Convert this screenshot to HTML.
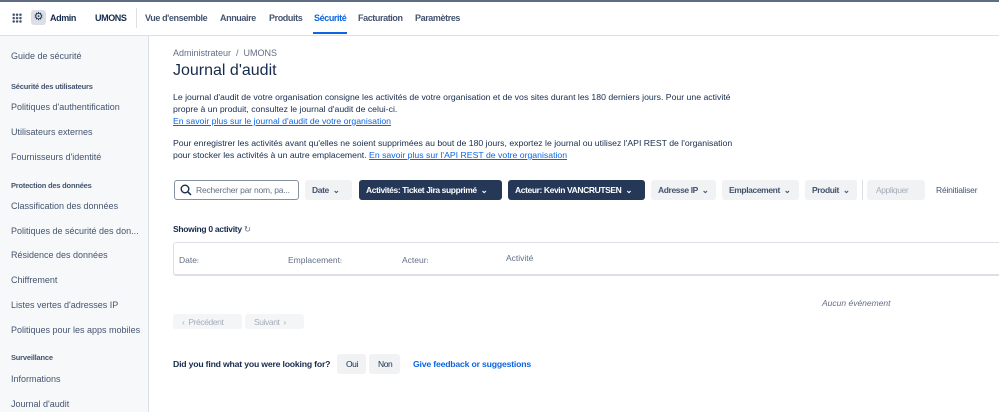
<!DOCTYPE html>
<html><head><meta charset="utf-8"><style>
*{margin:0;padding:0;box-sizing:border-box}
body{width:999px;height:412px;overflow:hidden;background:#fff;font-family:"Liberation Sans",sans-serif;color:#172b4d;position:relative}
.a{position:absolute;white-space:nowrap}
.nav{font-size:9px;letter-spacing:-0.4px;font-weight:bold;color:#44546f;top:13px}
.sb{font-size:9px;color:#44546f;left:11px}
.sh{font-size:7.5px;font-weight:bold;color:#44546f;left:11px;letter-spacing:-0.2px}
.btn{position:absolute;top:180px;height:20px;background:#f1f2f4;border-radius:3px;font-size:8.5px;letter-spacing:-0.4px;font-weight:bold;color:#44546f;padding:5px 0 0 7px;white-space:nowrap;overflow:hidden}
.dk{background:#253858;color:#fff}
.th{font-size:8.5px;color:#626f86;top:255px}
p.t{font-size:8.7px;line-height:12px;color:#172b4d}
a{color:#0c66e4}
</style></head><body>
<div class="a" style="left:0;top:0;width:999px;height:2px;background:#5e6c84"></div>
<div class="a" style="left:0;top:35px;width:999px;height:1px;background:#dcdfe4"></div>
<div class="a" style="left:12px;top:13px;width:10px;height:10px;background:radial-gradient(circle,#44546f 1.2px,transparent 1.4px) 0 0/3.4px 3.4px"></div>
<div class="a" style="left:31px;top:10px;width:15px;height:15px;background:#dcdfe4;border-radius:3px;font-size:11px;text-align:center;line-height:15px;color:#172b4d">⚙</div>
<div class="a nav" style="left:50px;color:#172b4d">Admin</div>
<div class="a nav" style="left:95px;color:#172b4d">UMONS</div>
<div class="a" style="left:136px;top:8px;width:1px;height:20px;background:#dcdfe4"></div>
<div class="a nav" style="left:145px">Vue d'ensemble</div>
<div class="a nav" style="left:220px">Annuaire</div>
<div class="a nav" style="left:269px">Produits</div>
<div class="a nav" style="left:314px;color:#0c66e4">Sécurité</div>
<div class="a" style="left:313px;top:32px;width:34px;height:2px;background:#0c66e4"></div>
<div class="a nav" style="left:358px">Facturation</div>
<div class="a nav" style="left:415px">Paramètres</div>
<div class="a" style="left:0;top:36px;width:149px;height:376px;background:#f7f8f9;border-right:1px solid #dcdfe4"></div>
<div class="a sb" style="top:51px">Guide de sécurité</div>
<div class="a sh" style="top:82px">Sécurité des utilisateurs</div>
<div class="a sb" style="top:102px">Politiques d'authentification</div>
<div class="a sb" style="top:127px">Utilisateurs externes</div>
<div class="a sb" style="top:152px">Fournisseurs d'identité</div>
<div class="a sh" style="top:181px">Protection des données</div>
<div class="a sb" style="top:201px">Classification des données</div>
<div class="a sb" style="top:226px">Politiques de sécurité des don...</div>
<div class="a sb" style="top:250px">Résidence des données</div>
<div class="a sb" style="top:275px">Chiffrement</div>
<div class="a sb" style="top:300px">Listes vertes d'adresses IP</div>
<div class="a sb" style="top:325px">Politiques pour les apps mobiles</div>
<div class="a sh" style="top:353px">Surveillance</div>
<div class="a sb" style="top:374px">Informations</div>
<div class="a sb" style="top:399px">Journal d'audit</div>
<div class="a" style="left:173px;top:48px;font-size:9px;color:#626f86">Administrateur &nbsp;/&nbsp; UMONS</div>
<div class="a" style="left:173px;top:62px;font-size:16px;color:#172b4d">Journal d'audit</div>
<p class="a t" style="left:173px;top:91px">Le journal d'audit de votre organisation consigne les activités de votre organisation et de vos sites durant les 180 derniers jours. Pour une activité<br>propre à un produit, consultez le journal d'audit de celui-ci.<br><a style="text-decoration:underline">En savoir plus sur le journal d'audit de votre organisation</a></p>
<p class="a t" style="left:173px;top:137px">Pour enregistrer les activités avant qu'elles ne soient supprimées au bout de 180 jours, exportez le journal ou utilisez l'API REST de l'organisation<br>pour stocker les activités à un autre emplacement. <a style="text-decoration:underline">En savoir plus sur l'API REST de votre organisation</a></p>
<div class="a" style="left:174px;top:180px;width:125px;height:20px;border:1px solid #8590a2;border-radius:3px;font-size:8.5px;letter-spacing:-0.2px;color:#626f86;padding:4px 0 0 21px;overflow:hidden">Rechercher par nom, pa...
<svg style="position:absolute;left:5px;top:3px" width="12" height="12" viewBox="0 0 12 12"><circle cx="5" cy="5" r="3.8" fill="none" stroke="#172b4d" stroke-width="1.4"/><path d="M8 8l3 3" stroke="#172b4d" stroke-width="1.5"/></svg></div>
<div class="btn" style="left:305px;width:47px">Date &nbsp;⌄</div>
<div class="btn dk" style="left:359px;width:143px">Activités: Ticket Jira supprimé &nbsp;⌄</div>
<div class="btn dk" style="left:508px;width:137px">Acteur: Kevin VANCRUTSEN &nbsp;⌄</div>
<div class="btn" style="left:651px;width:65px">Adresse IP &nbsp;⌄</div>
<div class="btn" style="left:722px;width:77px">Emplacement &nbsp;⌄</div>
<div class="btn" style="left:805px;width:52px">Produit &nbsp;⌄</div>
<div class="a" style="left:862px;top:180px;width:1px;height:20px;background:#dcdfe4"></div>
<div class="btn" style="left:867px;width:58px;color:#a5adba;font-weight:normal">&nbsp;Appliquer</div>
<div class="a" style="left:936px;top:185px;font-size:8.5px;letter-spacing:-0.2px;color:#44546f">Réinitialiser</div>
<div class="a" style="left:173px;top:224px;font-size:8.5px;letter-spacing:-0.3px;font-weight:bold">Showing 0 activity <span style="font-weight:normal;color:#626f86">↻</span></div>
<div class="a" style="left:173px;top:242px;width:830px;height:34px;border:1px solid #dcdfe4;border-bottom:2px solid #dcdfe4;border-radius:3px"></div>
<div class="a th" style="left:179px">Date<span style="font-size:6px">⁝</span></div>
<div class="a th" style="left:288px">Emplacement<span style="font-size:6px">⁝</span></div>
<div class="a th" style="left:402px">Acteur<span style="font-size:6px">⁝</span></div>
<div class="a th" style="left:506px;top:253px">Activité</div>
<div class="a" style="left:822px;top:298px;font-size:8.5px;font-style:italic;color:#626f86">Aucun événement</div>
<div class="btn" style="left:173px;top:314px;width:69px;height:15px;padding-top:3px;font-weight:normal;color:#a5adba;background:#f4f5f7">&nbsp;‹ &nbsp;Précédent</div>
<div class="btn" style="left:245px;top:314px;width:59px;height:15px;padding-top:3px;font-weight:normal;color:#a5adba;background:#f4f5f7">&nbsp;Suivant &nbsp;›</div>
<div class="a" style="left:173px;top:359px;font-size:8.7px;letter-spacing:-0.2px;font-weight:bold">Did you find what you were looking for?</div>
<div class="btn" style="left:337px;top:354px;width:29px;height:20px;font-weight:normal;color:#172b4d;padding-top:5px">&nbsp;Oui</div>
<div class="btn" style="left:369px;top:354px;width:31px;height:20px;font-weight:normal;color:#172b4d;padding-top:5px">&nbsp;Non</div>
<div class="a" style="left:413px;top:359px;font-size:8.7px;letter-spacing:-0.2px;color:#0c66e4;font-weight:bold">Give feedback or suggestions</div>
</body></html>
